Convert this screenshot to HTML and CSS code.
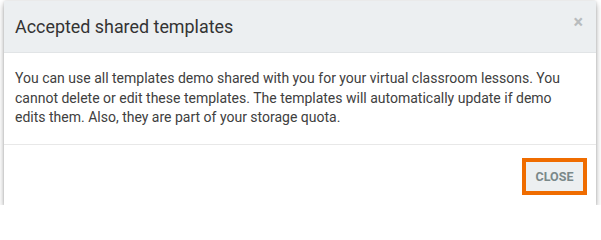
FILE: index.html
```html
<!DOCTYPE html>
<html>
<head>
<meta charset="utf-8">
<link rel="stylesheet" href="styles.css">
</head>
<body>
<div class="modal">
  <div class="modal-header">
    <h4 class="modal-title">Accepted shared templates</h4>
    <span class="modal-close">&times;</span>
  </div>
  <div class="modal-body">
    You can use all templates demo shared with you for your virtual classroom lessons. You cannot delete or edit these templates. The templates will automatically update if demo edits them. Also, they are part of your storage quota.
  </div>
  <div class="modal-footer">
    <button class="btn-close">CLOSE</button>
  </div>
</div>
</body>
</html>
```
FILE: styles.css
```css
html, body {
  margin: 0;
  padding: 0;
  background: #ffffff;
}
body {
  padding: 1px 4px 0 4px;
  font-family: Roboto, "Liberation Sans", sans-serif;
}
.modal {
  width: 592px;
  background: #ffffff;
  box-shadow: 0 3px 6px rgba(0, 0, 0, 0.35), 0 0 2px rgba(0, 0, 0, 0.12);
}
.modal-header {
  height: 52px;
  background: #eceff1;
  border-bottom: 1px solid #e1e4e6;
  display: flex;
  align-items: center;
  justify-content: space-between;
  padding: 0 13px 0 11px;
  box-sizing: border-box;
}
.modal-title {
  margin: 0;
  font-size: 17.9px;
  font-weight: 400;
  color: #333333;
  padding-bottom: 1px;
}
.modal-close {
  font-size: 18px;
  font-weight: 700;
  color: #b8bcbe;
  line-height: 1;
  margin-top: -10px;
}
.modal-body {
  padding: 16px 24px 16px 11px;
  font-size: 14px;
  line-height: 19.5px;
  color: #404040;
}
.modal-footer {
  border-top: 1px solid #e8e8e8;
  padding: 13px 9px 10px 11px;
  display: flex;
  justify-content: flex-end;
}
.btn-close {
  box-sizing: border-box;
  width: 65px;
  height: 37px;
  border: 4px solid #ef6c00;
  background: #eceff1;
  color: #7a8889;
  font-family: Roboto, "Liberation Sans", sans-serif;
  font-weight: 700;
  font-size: 12.5px;
  padding: 0;
  margin: 0;
}
```
